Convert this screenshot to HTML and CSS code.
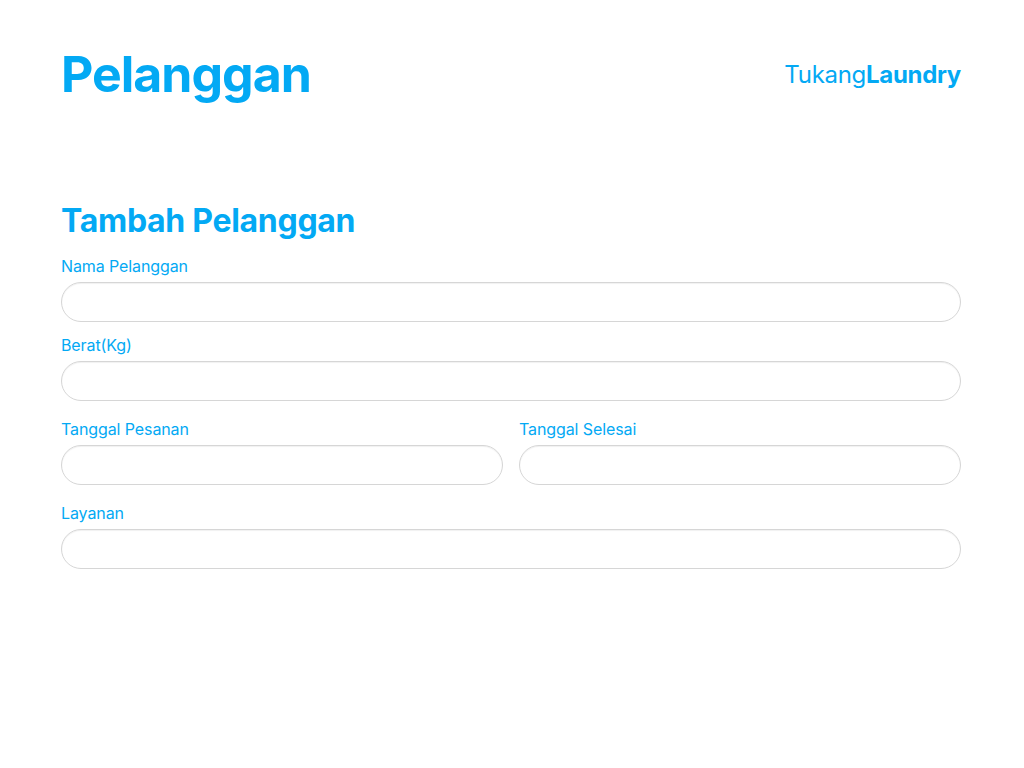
FILE: index.html
```html
<!DOCTYPE html>
<html lang="id">
<head>
<meta charset="utf-8">
<title>Pelanggan - TukangLaundry</title>
<link rel="stylesheet" href="styles.css">
</head>
<body>
<div class="page">
  <header class="header">
    <h1 class="title">Pelanggan</h1>
    <div class="brand">Tukang<b>Laundry</b></div>
  </header>
  <main class="form-wrap">
    <h2 class="subtitle">Tambah Pelanggan</h2>
    <form class="form">
      <div class="field f1">
        <label class="label">Nama Pelanggan</label>
        <input class="input" type="text">
      </div>
      <div class="field f2">
        <label class="label">Berat(Kg)</label>
        <input class="input" type="text">
      </div>
      <div class="row">
        <div class="field">
          <label class="label">Tanggal Pesanan</label>
          <input class="input" type="text">
        </div>
        <div class="field">
          <label class="label">Tanggal Selesai</label>
          <input class="input" type="text">
        </div>
      </div>
      <div class="field f4">
        <label class="label">Layanan</label>
        <input class="input" type="text">
      </div>
    </form>
  </main>
</div>
</body>
</html>
```

FILE: styles.css
```css
* { box-sizing: border-box; }
html, body { margin: 0; padding: 0; background: #fff; }
body { font-family: Inter, "Noto Sans", sans-serif; color: #03a9f4; }
.page { padding: 0 63px 0 61px; }
.header {
  display: flex;
  justify-content: space-between;
  align-items: flex-start;
  padding-top: 40px;
}
.title {
  margin: 0;
  font-size: 50px;
  font-weight: 700;
  line-height: 68px;
  letter-spacing: -1px;
}
.brand {
  font-size: 24px;
  font-weight: 400;
  line-height: 30px;
  margin-top: 20px;
  letter-spacing: -0.3px;
}
.brand b { font-weight: 700; }
.form-wrap { margin-top: 93px; }
.subtitle {
  margin: 0;
  font-size: 32px;
  font-weight: 700;
  line-height: 40px;
  letter-spacing: -0.3px;
}
.form { display: flex; flex-direction: column; }
.field { display: flex; flex-direction: column; }
.label {
  font-size: 16px;
  line-height: 22px;
  letter-spacing: -0.1px;
  margin-bottom: 5px;
}
.f1 { margin-top: 14px; }
.f2 { margin-top: 12px; }
.row {
  display: grid;
  grid-template-columns: 1fr 1fr;
  gap: 16px;
  margin-top: 17px;
}
.f4 { margin-top: 17px; }
.input {
  height: 40px;
  width: 100%;
  border: 1px solid #d6d6d6;
  border-radius: 20px;
  background: #fff;
  box-shadow: inset 0 1px 1px rgba(0,0,0,0.06);
  outline: none;
  font: inherit;
  padding: 0 18px;
}
```
